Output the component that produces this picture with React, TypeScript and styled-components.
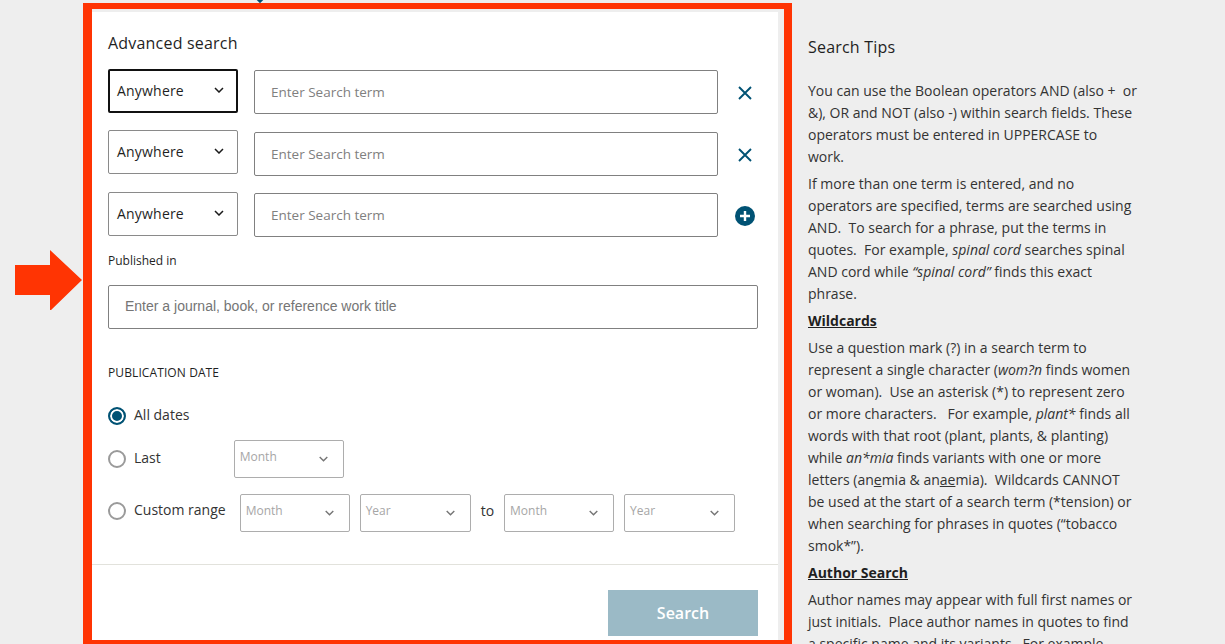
import React from "react";
import styled, { createGlobalStyle } from "styled-components";

const GlobalStyle = createGlobalStyle`
  html, body {
    margin: 0;
    padding: 0;
    height: 100%;
    overflow: hidden;
    background: #eeeeee;
  }
  * {
    box-sizing: border-box;
  }
`;

const Chevron = () => (
  <svg width="10" height="6" viewBox="0 0 10 6" fill="none">
    <path d="M1 1l4 4 4-4" stroke="#1a1a1a" strokeWidth="1.5" />
  </svg>
);

const DateChevron = () => (
  <svg width="9" height="6" viewBox="0 0 9 6" fill="none">
    <path d="M.7 1l3.8 3.8L8.3 1" stroke="#757575" strokeWidth="1.4" />
  </svg>
);

const CloseIcon = () => (
  <svg width="14" height="14" viewBox="0 0 14 14" fill="none">
    <path d="M1 1l12 12M13 1L1 13" stroke="#005274" strokeWidth="1.9" />
  </svg>
);

const PlusIcon = () => (
  <svg width="20" height="20" viewBox="0 0 20 20">
    <circle cx="10" cy="10" r="10" fill="#005274" />
    <path d="M10 5v10M5 10h10" stroke="#fff" strokeWidth="2.4" />
  </svg>
);

const App = () => {
  return (
    <Page>
      <GlobalStyle />
      <TopMarker />
      <Arrow viewBox="0 0 68 60" width="68" height="60">
        <path d="M0 15h35V0l32 30-32 31V45H0z" fill="#ff3403" />
      </Arrow>
      <Highlight>
        <Card>
          <CardBody>
            <CardTitle>Advanced search</CardTitle>
            <SearchRow $top={16}>
              <FieldSelect $focused>
                Anywhere
                <Chevron />
              </FieldSelect>
              <TermInput $offset={1} placeholder="Enter Search term" />
              <RowAction $offset={17}>
                <CloseIcon />
              </RowAction>
            </SearchRow>
            <SearchRow $top={17}>
              <FieldSelect>
                Anywhere
                <Chevron />
              </FieldSelect>
              <TermInput $offset={2} placeholder="Enter Search term" />
              <RowAction $offset={18}>
                <CloseIcon />
              </RowAction>
            </SearchRow>
            <SearchRow $top={18}>
              <FieldSelect>
                Anywhere
                <Chevron />
              </FieldSelect>
              <TermInput $offset={1} placeholder="Enter Search term" />
              <RowAction $offset={14}>
                <PlusIcon />
              </RowAction>
            </SearchRow>
            <SmallLabel>Published in</SmallLabel>
            <TitleInput placeholder="Enter a journal, book, or reference work title" />
            <SectionLabel>PUBLICATION DATE</SectionLabel>
            <RadioRow $top={26}>
              <Radio $checked />
              <RadioLabel>All dates</RadioLabel>
            </RadioRow>
            <RadioRow $top={15}>
              <Radio />
              <RadioLabel>Last</RadioLabel>
              <DateSelect $left={73} $width={110}>
                <span>Month</span>
                <DateChevron />
              </DateSelect>
            </RadioRow>
            <RadioRow $top={12}>
              <Radio />
              <RadioLabel>Custom range</RadioLabel>
              <DateSelect $left={14} $width={110} $drop>
                <span>Month</span>
                <DateChevron />
              </DateSelect>
              <DateSelect $left={10} $width={111} $drop>
                <span>Year</span>
                <DateChevron />
              </DateSelect>
              <ToLabel>to</ToLabel>
              <DateSelect $left={10} $width={110} $drop>
                <span>Month</span>
                <DateChevron />
              </DateSelect>
              <DateSelect $left={10} $width={111} $drop>
                <span>Year</span>
                <DateChevron />
              </DateSelect>
            </RadioRow>
          </CardBody>
          <CardFooter>
            <SearchButton>Search</SearchButton>
          </CardFooter>
        </Card>
      </Highlight>
      <Tips>
        <TipsTitle>Search Tips</TipsTitle>
        <TipsText>
          You can use the Boolean operators AND (also +&nbsp; or &amp;), OR and NOT (also -) within
          search fields. These operators must be entered in UPPERCASE to
          <br />
          work.
        </TipsText>
        <TipsText>
          If more than one term is entered, and no operators are specified, terms are searched
          using AND.&nbsp; To search for a phrase, put the terms in quotes.&nbsp; For example,{" "}
          <em>spinal cord</em> searches spinal AND cord while <em>“spinal cord”</em> finds this
          exact phrase.
        </TipsText>
        <TipsHeading>Wildcards</TipsHeading>
        <TipsText>
          Use a question mark (?) in a search term to represent a single character (<em>wom?n</em>{" "}
          finds women or woman).&nbsp; Use an asterisk (*) to represent zero or more
          characters.&nbsp;&nbsp; For example, <em>plant*</em> finds all words with that root
          (plant, plants, &amp; planting) while <em>an*mia</em> finds variants with one or more
          letters (an<u>e</u>mia &amp; an<u>ae</u>mia).&nbsp; Wildcards CANNOT be used at the start
          of a search term (*tension) or when searching for phrases in quotes (“tobacco smok*”).
        </TipsText>
        <TipsHeading>Author Search</TipsHeading>
        <TipsText>
          Author names may appear with full first names or just initials.&nbsp; Place author names
          in quotes to find a specific name and its variants.&nbsp; For example,
        </TipsText>
      </Tips>
    </Page>
  );
};

const Page = styled.div`
  position: relative;
  display: flex;
  align-items: flex-start;
  height: 644px;
  padding: 3px 0 0 83px;
  overflow: hidden;
  background: #eeeeee;
  font-family: "Open Sans", sans-serif;
  color: #1f1f1f;
`;

const TopMarker = styled.div`
  position: absolute;
  top: -4px;
  left: 257px;
  width: 6px;
  height: 6px;
  background: #005274;
  transform: rotate(45deg);
`;

const Arrow = styled.svg`
  position: absolute;
  top: 250px;
  left: 15px;
`;

const Highlight = styled.div`
  flex: none;
  width: 709px;
  height: 641px;
  border-style: solid;
  border-color: #ff3403;
  border-width: 6px 8px 4px 9px;
  padding: 3px 6px 0 0;
`;

const Card = styled.div`
  height: 100%;
  background: #ffffff;
`;

const CardBody = styled.div`
  height: 553px;
  padding: 21px 20px 0 16px;
  border-bottom: 1px solid #e2e2dc;
`;

const CardTitle = styled.h2`
  margin: 0;
  font-size: 16px;
  font-weight: 500;
  line-height: 20px;
  letter-spacing: 0.2px;
  color: #1f1f1f;
`;

const SearchRow = styled.div<{ $top: number }>`
  display: flex;
  align-items: flex-start;
  margin-top: ${(p) => p.$top}px;
  height: 44px;
`;

const FieldSelect = styled.div<{ $focused?: boolean }>`
  flex: none;
  display: flex;
  align-items: center;
  justify-content: space-between;
  width: 130px;
  height: 44px;
  padding: 0 ${(p) => (p.$focused ? 12 : 13)}px 2px ${(p) => (p.$focused ? 7 : 8)}px;
  border: ${(p) => (p.$focused ? "2px solid #111111" : "1px solid #8a8a8a")};
  border-radius: 2px;
  background: #ffffff;
  font-size: 14px;
  letter-spacing: 0.2px;
  color: #1f1f1f;
`;

const TermInput = styled.input<{ $offset: number }>`
  flex: none;
  width: 464px;
  height: 44px;
  margin: ${(p) => p.$offset}px 0 0 16px;
  padding: 0 16px;
  border: 1px solid #808080;
  border-radius: 2px;
  outline: none;
  font-family: "Open Sans", sans-serif;
  font-size: 13.5px;
  &::placeholder {
    color: #808080;
    opacity: 1;
  }
`;

const RowAction = styled.div<{ $offset: number }>`
  display: flex;
  justify-content: center;
  width: 20px;
  margin: ${(p) => p.$offset}px 0 0 17px;
`;

const SmallLabel = styled.div`
  margin-top: 16px;
  font-size: 12px;
  line-height: 18px;
  color: #1f1f1f;
`;

const TitleInput = styled.input`
  display: block;
  width: 650px;
  height: 44px;
  margin-top: 15px;
  padding: 0 16px 2px;
  border: 1px solid #808080;
  border-radius: 2px;
  outline: none;
  font-family: "Liberation Sans", Arial, sans-serif;
  font-size: 14px;
  &::placeholder {
    color: #757575;
    opacity: 1;
  }
`;

const SectionLabel = styled.div`
  margin-top: 36px;
  font-size: 12px;
  font-weight: 500;
  line-height: 16px;
  letter-spacing: 0.1px;
  color: #1f1f1f;
`;

const RadioRow = styled.div<{ $top: number }>`
  display: flex;
  align-items: center;
  margin-top: ${(p) => p.$top}px;
`;

const Radio = styled.span<{ $checked?: boolean }>`
  flex: none;
  width: 18px;
  height: 18px;
  border-radius: 50%;
  border: 2px solid ${(p) => (p.$checked ? "#005274" : "#9a9a9a")};
  background: ${(p) => (p.$checked ? "#005274" : "#ffffff")};
  box-shadow: ${(p) => (p.$checked ? "inset 0 0 0 2px #ffffff" : "none")};
`;

const RadioLabel = styled.span`
  margin: -2px 0 0 8px;
  font-size: 14px;
  line-height: 18px;
  color: #333333;
  white-space: nowrap;
`;

const DateSelect = styled.div<{ $left: number; $width: number; $drop?: boolean }>`
  flex: none;
  display: flex;
  align-items: center;
  justify-content: space-between;
  width: ${(p) => p.$width}px;
  height: 38px;
  margin: ${(p) => (p.$drop ? 4 : 0)}px 0 0 ${(p) => p.$left}px;
  padding: 0 15px 0 5px;
  border: 1px solid #adadad;
  border-radius: 2px;
  font-size: 12px;
  color: #a6a6a6;
  span {
    margin-top: -5px;
  }
`;

const ToLabel = styled.span`
  margin: -2px 0 0 10px;
  font-size: 14px;
  color: #333333;
`;

const CardFooter = styled.div`
  display: flex;
  justify-content: flex-end;
  padding: 25px 20px 0 0;
`;

const SearchButton = styled.button`
  width: 150px;
  height: 46px;
  border: none;
  background: #9bbac6;
  color: #ffffff;
  font-family: "Open Sans", sans-serif;
  font-size: 16px;
  font-weight: 600;
`;

const Tips = styled.aside`
  flex: none;
  width: 346px;
  padding: 33px 0 0 16px;
  font-size: 14px;
  line-height: 22px;
  color: #333333;
`;

const TipsTitle = styled.h3`
  margin: 0 0 22px;
  font-size: 16px;
  font-weight: 500;
  line-height: 22px;
  letter-spacing: 0.2px;
  color: #1f1f1f;
`;

const TipsText = styled.p`
  margin: 0 0 5px;
`;

const TipsHeading = styled.div`
  margin-bottom: 5px;
  font-weight: 700;
  text-decoration: underline;
  color: #1f1f1f;
`;

export default App;
